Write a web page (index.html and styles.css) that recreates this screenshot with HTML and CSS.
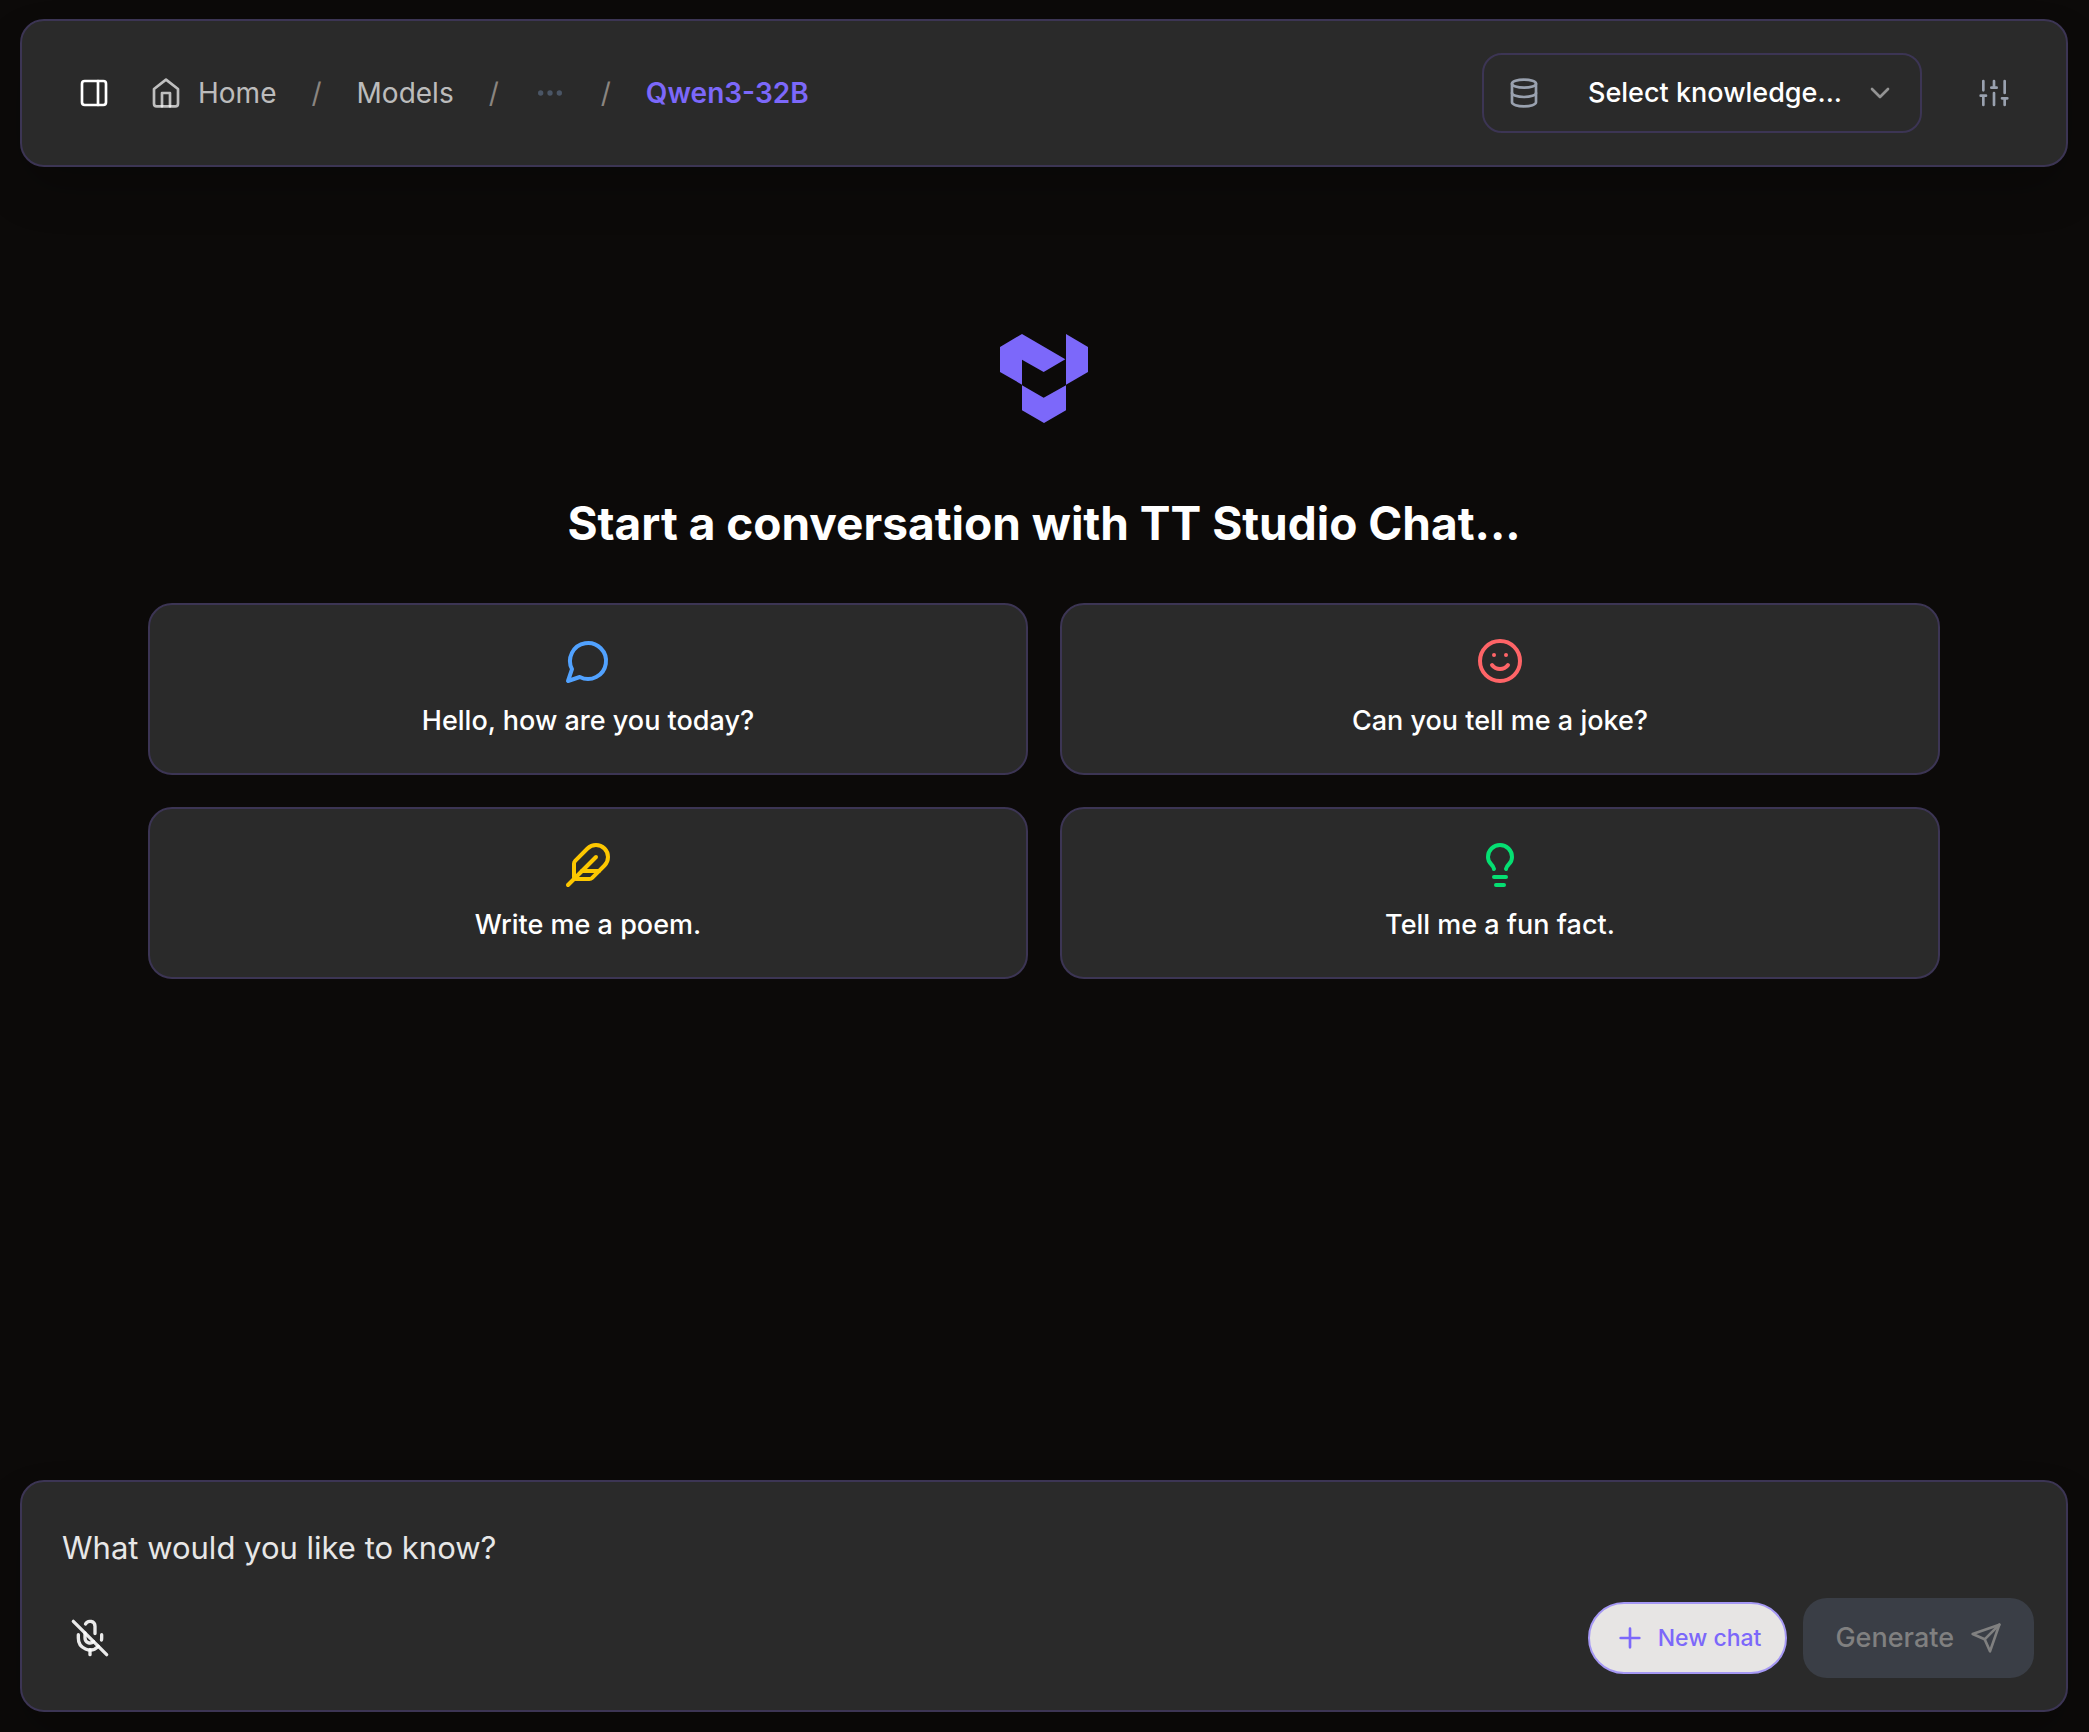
FILE: index.html
```html
<!DOCTYPE html>
<html lang="en">
  <head>
    <meta charset="utf-8">
    <meta name="viewport" content="width=device-width, initial-scale=1">
    <title>TT Studio Chat</title>
    <link rel="stylesheet" href="styles.css">
  </head>
  <body>
    <header class="panel topbar">
      <button type="button" class="icon-button" aria-label="Toggle history">
        <svg class="icon" viewBox="0 0 24 24"><rect x="3" y="3" width="18" height="18" rx="2"/><path d="M15 3v18"/></svg>
      </button>
      <nav aria-label="Breadcrumb">
        <ol class="breadcrumb">
          <li>
            <a href="#" class="crumb">
              <svg class="icon" viewBox="0 0 24 24"><path d="m3 9 9-7 9 7v11a2 2 0 0 1-2 2H5a2 2 0 0 1-2-2z"/><path d="M9 22V12h6v10"/></svg>
              Home
            </a>
          </li>
          <li class="separator" aria-hidden="true">/</li>
          <li><a href="#" class="crumb">Models</a></li>
          <li class="separator" aria-hidden="true">/</li>
          <li>
            <button type="button" class="more" aria-label="More">
              <svg class="icon" viewBox="0 0 24 24"><circle cx="12" cy="12" r="1"/><circle cx="19" cy="12" r="1"/><circle cx="5" cy="12" r="1"/></svg>
            </button>
          </li>
          <li class="separator" aria-hidden="true">/</li>
          <li class="current" aria-current="page">Qwen3-32B</li>
        </ol>
      </nav>
      <div class="topbar-actions">
        <div class="knowledge">
          <select class="knowledge-select" aria-label="Knowledge base">
            <option>Select knowledge...</option>
          </select>
          <svg class="icon knowledge-icon" viewBox="0 0 24 24"><ellipse cx="12" cy="5" rx="9" ry="3"/><path d="M3 5v14a9 3 0 0 0 18 0V5"/><path d="M3 12a9 3 0 0 0 18 0"/></svg>
          <svg class="icon knowledge-chevron" viewBox="0 0 24 24"><path d="m6 9 6 6 6-6"/></svg>
        </div>
        <button type="button" class="icon-button settings" aria-label="Settings">
          <svg class="icon" viewBox="0 0 24 24"><path d="M4 21v-7M4 10V3M12 21v-9M12 8V3M20 21v-5M20 12V3M2 14h4M10 8h4M18 16h4"/></svg>
        </button>
      </div>
    </header>

    <main class="welcome">
      <svg class="logo" viewBox="0 0 264 267" aria-hidden="true">
        <path d="M0 39 66 0l130 76-65 38-65-37v75L0 114z"/>
        <path d="m198 0 66 39v75l-66 38z"/>
        <path d="m66 154 65 37 67-37v75l-66 38-66-38z"/>
      </svg>
      <h1 class="title">Start a conversation with TT Studio Chat...</h1>
      <div class="prompts">
        <button type="button" class="panel prompt">
          <svg class="icon prompt-icon blue" viewBox="0 0 24 24"><path d="M7.9 20A9 9 0 1 0 4 16.100L2 22Z"/></svg>
          Hello, how are you today?
        </button>
        <button type="button" class="panel prompt">
          <svg class="icon prompt-icon red" viewBox="0 0 24 24"><circle cx="12" cy="12" r="10"/><path d="M8 14s1.500 2 4 2 4-2 4-2M9 9h.01M15 9h.01"/></svg>
          Can you tell me a joke?
        </button>
        <button type="button" class="panel prompt">
          <svg class="icon prompt-icon yellow" viewBox="0 0 24 24"><path d="M12.670 19a2 2 0 0 0 1.416-.588l6.154-6.172a6 6 0 0 0-8.490-8.490L5.586 9.914A2 2 0 0 0 5 11.328V18a1 1 0 0 0 1 1z"/><path d="M16 8 2 22"/><path d="M17.500 15H9"/></svg>
          Write me a poem.
        </button>
        <button type="button" class="panel prompt">
          <svg class="icon prompt-icon green" viewBox="0 0 24 24"><path d="M15 14c.2-1 .7-1.700 1.500-2.500 1-.9 1.500-2.200 1.500-3.500A6 6 0 0 0 6 8c0 1 .2 2.200 1.500 3.500.7.7 1.300 1.500 1.500 2.500"/><path d="M9 18h6M10 22h4"/></svg>
          Tell me a fun fact.
        </button>
      </div>
    </main>

    <form class="panel composer">
      <textarea class="composer-input" rows="1" placeholder="What would you like to know?" aria-label="Message"></textarea>
      <div class="composer-bar">
        <button type="button" class="mic" aria-label="Voice input">
          <svg class="icon mic-icon" viewBox="0 0 24 24"><path d="m2 2 20 20"/><path d="M18.890 13.230A7.120 7.120 0 0 0 19 12v-2"/><path d="M5 10v2a7 7 0 0 0 12 5"/><path d="M15 9.340V5a3 3 0 0 0-5.680-1.330"/><path d="M9 9v3a3 3 0 0 0 5.120 2.120"/><path d="M12 19v3"/></svg>
        </button>
        <div class="composer-actions">
          <button type="button" class="new-chat">
            <svg class="icon" viewBox="0 0 24 24"><path d="M5 12h14M12 5v14"/></svg>
            New chat
          </button>
          <button type="submit" class="generate" disabled>
            Generate
            <svg class="icon" viewBox="0 0 24 24"><path d="m22 2-7 20-4-9-9-4Z"/><path d="M22 2 11 13"/></svg>
          </button>
        </div>
      </div>
    </form>
  </body>
</html>
```
FILE: styles.css
```css
* {
  box-sizing: border-box;
}

body {
  display: flex;
  flex-direction: column;
  min-height: 100vh;
  margin: 0;
  padding: 19px 21px 20px 20px;
  background: #0c0a09;
  color: #fff;
  font-family: Inter, "Liberation Sans", sans-serif;
  font-size: 27px;
  line-height: 40px;
}

button,
select,
textarea {
  margin: 0;
  padding: 0;
  border: none;
  background: none;
  color: inherit;
  font: inherit;
}

button {
  cursor: pointer;
}

.panel {
  border: 2px solid #3c3554;
  border-radius: 24px;
  background: #2a2a2a;
}

.icon {
  display: block;
  flex: none;
  width: 32px;
  height: 32px;
  fill: none;
  stroke: currentColor;
  stroke-width: 2;
  stroke-linecap: round;
  stroke-linejoin: round;
}

/* top bar */

.topbar {
  display: flex;
  align-items: center;
  gap: 16px;
  padding: 32px;
  box-shadow: 0 24px 48px -6px rgba(0, 0, 0, 0.25);
}

.icon-button {
  display: flex;
  align-items: center;
  justify-content: center;
  width: 80px;
  height: 80px;
}

.breadcrumb {
  display: flex;
  align-items: center;
  gap: 35px;
  margin: 0;
  padding: 0;
  font-size: 28px;
  list-style: none;
}

.crumb {
  display: flex;
  align-items: center;
  gap: 16px;
  color: rgba(255, 255, 255, 0.7);
  text-decoration: none;
}

.separator {
  color: #8a8580;
}

.more {
  display: block;
  color: #4a5565;
}

.current {
  color: #7c68fa;
  font-weight: 600;
}

.topbar-actions {
  display: flex;
  align-items: center;
  gap: 32px;
  margin-left: auto;
}

.knowledge {
  position: relative;
  width: 440px;
}

.knowledge-select {
  width: 100%;
  height: 80px;
  padding: 0 64px 0 104px;
  border: 2px solid #3c3554;
  border-radius: 20px;
  appearance: none;
  font-weight: 500;
}

.knowledge-icon,
.knowledge-chevron {
  position: absolute;
  top: 24px;
  pointer-events: none;
}

.knowledge-icon {
  left: 26px;
  color: #99a1af;
}

.knowledge-chevron {
  right: 26px;
  color: #949494;
}

.settings {
  color: #99a1af;
}

/* welcome screen */

.welcome {
  display: flex;
  flex: 1;
  flex-direction: column;
  align-items: center;
  padding: 167px 0 64px;
}

.logo {
  width: 88px;
  height: 89px;
  fill: #7c68fa;
}

.title {
  margin: 68px 0 48px;
  font-size: 46px;
  font-weight: 700;
  line-height: 64px;
  text-align: center;
}

.prompts {
  display: grid;
  grid-template-columns: 1fr 1fr;
  gap: 32px;
  width: 100%;
  max-width: 1792px;
}

.prompt {
  display: flex;
  flex-direction: column;
  align-items: center;
  gap: 16px;
  padding: 32px;
  font-weight: 500;
}

.prompt-icon {
  width: 48px;
  height: 48px;
}

.blue {
  color: #51a2ff;
}

.red {
  color: #ff6467;
}

.yellow {
  color: #fdc700;
}

.green {
  color: #05df72;
}

/* message box */

.composer {
  display: flex;
  flex-direction: column;
  gap: 16px;
  padding: 32px;
  box-shadow: 0 24px 48px -6px rgba(0, 0, 0, 0.25);
}

.composer-input {
  display: block;
  width: 100%;
  height: 68px;
  padding: 8px;
  outline: none;
  overflow: hidden;
  resize: none;
  font-size: 31px;
  line-height: 52px;
}

.composer-input::placeholder {
  color: #e7e7e7;
  opacity: 1;
}

.composer-bar,
.composer-actions {
  display: flex;
  align-items: center;
  gap: 16px;
}

.composer-bar {
  justify-content: space-between;
}

.mic {
  padding: 16px;
  color: rgba(255, 255, 255, 0.9);
}

.mic-icon {
  width: 40px;
  height: 40px;
}

.new-chat,
.generate {
  display: flex;
  align-items: center;
  font-weight: 500;
}

.new-chat {
  gap: 12px;
  height: 72px;
  padding: 0 24px;
  border: 2px solid #a598f4;
  border-radius: 36px;
  background: #e7e5e4;
  color: #7c68fa;
  font-size: 23px;
}

.generate {
  gap: 16px;
  height: 80px;
  padding: 0 32px;
  border-radius: 24px;
  background: #3a3e46;
  color: #808080;
  cursor: default;
}
```
